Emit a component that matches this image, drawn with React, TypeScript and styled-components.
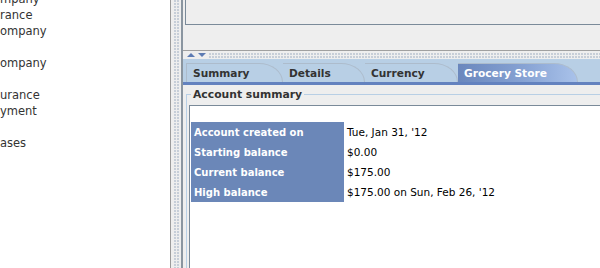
import React from 'react';
import styled, { createGlobalStyle, css } from 'styled-components';

const Global = createGlobalStyle`
  html, body { margin: 0; padding: 0; }
  body { width: 600px; height: 268px; overflow: hidden; background: #eeeeee; }
`;

const dots = css`
  background-image: radial-gradient(circle at 1px 1px, #98a8bd 0.6px, transparent 0.8px);
  background-size: 3px 3px;
`;

const Frame = styled.div`
  display: flex;
  width: 600px;
  height: 268px;
  overflow: hidden;
  font-family: 'DejaVu Sans', sans-serif;
`;

const TreePane = styled.div`
  width: 170px;
  flex: none;
  background: #ffffff;
  border-right: 1px solid #9a9a9a;
  overflow: hidden;
`;

const TreeList = styled.ul`
  list-style: none;
  margin: -9px 0 0 0;
  padding: 0;
`;

const TreeRow = styled.li`
  height: 16px;
  line-height: 16px;
  font-size: 11.5px;
  color: #333333;
  white-space: nowrap;
`;

const SideDivider = styled.div`
  width: 10px;
  flex: none;
  background: #eeeeee;
  display: flex;
  justify-content: center;
`;

const DotColumn = styled.div`
  width: 5px;
  margin-left: 1px;
  ${dots}
`;

const Right = styled.div`
  flex: 1;
  display: flex;
  flex-direction: column;
  border-left: 2px solid #8a95a0;
  min-width: 0;
`;

const TopPane = styled.div`
  height: 50px;
  flex: none;
  background: #eeeeee;
  border-bottom: 1px solid #a0a0a0;
  padding-left: 1px;
`;

const TopInner = styled.div`
  height: 24px;
  margin-left: 1px;
  border-left: 1px solid #7a8a99;
  border-bottom: 1px solid #7a8a99;
  background: #eeeeee;
`;

const SplitBar = styled.div`
  height: 8px;
  flex: none;
  display: flex;
  align-items: center;
  gap: 3px;
  padding-left: 4px;
  background: #eeeeee;
`;

const Arrow = styled.div<{ $down?: boolean }>`
  width: 0;
  height: 0;
  border-left: 4px solid transparent;
  border-right: 4px solid transparent;
  ${(p) =>
    p.$down
      ? css`border-top: 4px solid #5d7bb3;`
      : css`border-bottom: 4px solid #5d7bb3;`}
`;

const DotRow = styled.div`
  flex: 1;
  height: 5px;
  ${dots}
`;

const Tabbed = styled.div`
  flex: 1;
  display: flex;
  flex-direction: column;
  min-height: 0;
`;

const TabBar = styled.div`
  height: 23px;
  flex: none;
  display: flex;
  align-items: flex-end;
  padding-left: 3px;
  background: #b8cfe5;
`;

const Tab = styled.div<{ $selected?: boolean; $w: number }>`
  width: ${(p) => p.$w}px;
  height: 19px;
  flex: none;
  box-sizing: border-box;
  display: flex;
  align-items: center;
  padding-left: 6px;
  border-top: 1px solid #adbccc;
  border-right: 1px solid #adbccc;
  border-top-right-radius: 24px 19px;
  font-size: 10.6px;
  font-weight: bold;
  white-space: nowrap;
  color: ${(p) => (p.$selected ? '#ffffff' : '#333333')};
  background: ${(p) =>
    p.$selected ? 'linear-gradient(to right, #6a87bd 0%, #86a2d3 55%, #a9c2ea 100%)' : 'transparent'};
  &:first-child {
    border-left: 1px solid #adbccc;
  }
`;

const TabStripe = styled.div`
  height: 3px;
  flex: none;
  background: #6382bf;
`;

const TabBody = styled.div`
  flex: 1;
  display: flex;
  flex-direction: column;
  padding: 3px 0 0 3px;
  background: #eeeeee;
`;

const Group = styled.fieldset`
  flex: 1;
  margin: 0;
  padding: 0 0 0 2px;
  border: none;
  border-top: 1px solid #b8cfe5;
  border-left: 1px solid #b8cfe5;
  display: flex;
  flex-direction: column;
`;

const GroupTitle = styled.legend`
  padding: 0 2px;
  margin-left: 2px;
  font-size: 10.8px;
  font-weight: bold;
  color: #333333;
`;

const Sheet = styled.div`
  flex: 1;
  margin-top: 4px;
  background: #ffffff;
  border-top: 1px solid #7a8a99;
  border-left: 1px solid #7a8a99;
  padding: 16px 0 0 1px;
`;

const SummaryGrid = styled.div`
  display: grid;
  grid-template-columns: 153px auto;
  grid-auto-rows: 20px;
  justify-content: start;
`;

const Key = styled.div`
  display: flex;
  align-items: center;
  padding-left: 3px;
  background: #6b87b8;
  color: #ffffff;
  font-size: 10px;
  font-weight: bold;
  white-space: nowrap;
`;

const Value = styled.div`
  display: flex;
  align-items: center;
  padding-left: 3px;
  font-size: 10.5px;
  color: #000000;
  white-space: nowrap;
`;

const treeItems = ['mpany', 'rance', 'ompany', '', 'ompany', '', 'urance', 'yment', '', 'ases', ''];

const summary: [string, string][] = [
  ['Account created on', "Tue, Jan 31, '12"],
  ['Starting balance', '$0.00'],
  ['Current balance', '$175.00'],
  ['High balance', "$175.00 on Sun, Feb 26, '12"],
];

const tabs: [string, number][] = [
  ['Summary', 97],
  ['Details', 82],
  ['Currency', 93],
  ['Grocery Store', 120],
];

export default function App() {
  return (
    <>
      <Global />
      <Frame>
        <TreePane>
          <TreeList>
            {treeItems.map((t, i) => (
              <TreeRow key={i}>{t || '\u00a0'}</TreeRow>
            ))}
          </TreeList>
        </TreePane>
        <SideDivider>
          <DotColumn />
        </SideDivider>
        <Right>
          <TopPane>
            <TopInner />
          </TopPane>
          <SplitBar>
            <Arrow />
            <Arrow $down />
            <DotRow />
          </SplitBar>
          <Tabbed>
            <TabBar>
              {tabs.map(([t, w], i) => (
                <Tab key={t} $w={w} $selected={i === 3}>
                  {t}
                </Tab>
              ))}
            </TabBar>
            <TabStripe />
            <TabBody>
              <Group>
                <GroupTitle>Account summary</GroupTitle>
                <Sheet>
                  <SummaryGrid>
                    {summary.map(([k, v]) => (
                      <React.Fragment key={k}>
                        <Key>{k}</Key>
                        <Value>{v}</Value>
                      </React.Fragment>
                    ))}
                  </SummaryGrid>
                </Sheet>
              </Group>
            </TabBody>
          </Tabbed>
        </Right>
      </Frame>
    </>
  );
}
